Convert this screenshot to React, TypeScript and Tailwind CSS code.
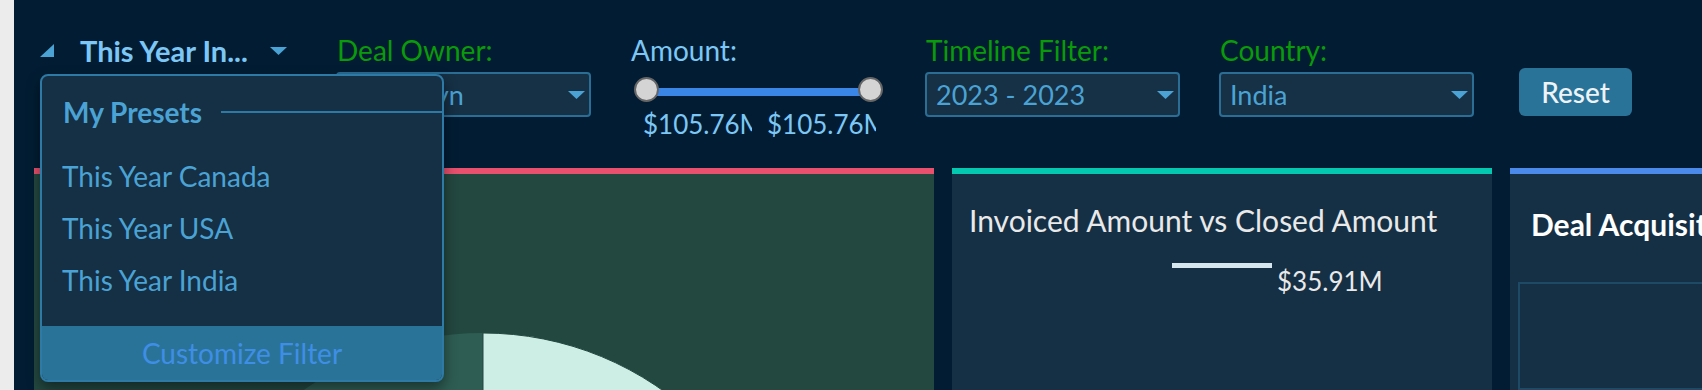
import React from 'react';

const presets = ['This Year Canada', 'This Year USA', 'This Year India'];

function Caret({ className = '' }: { className?: string }) {
  return (
    <svg width="17" height="8" viewBox="0 0 17 8" className={className}>
      <path d="M0 0h17L8.5 8z" fill="#4aa3d4" />
    </svg>
  );
}

function Select({ value }: { value: string }) {
  return (
    <div className="mt-[8px] flex h-[45px] w-[255px] items-center justify-between rounded-[4px] border-2 border-[#2a6e95] bg-[#163045] pl-[9px] pr-[4px]">
      <span className="text-[27px] leading-none text-[#4aa3d4] whitespace-nowrap">{value}</span>
      <Caret />
    </div>
  );
}

function FilterGroup({ label, value, className = '' }: { label: string; value: string; className?: string }) {
  return (
    <div className={`flex w-[255px] shrink-0 flex-col ${className}`}>
      <span className="pl-[1px] text-[28px] leading-none text-[#0a9a0a]">{label}</span>
      <Select value={value} />
    </div>
  );
}

function AmountSlider() {
  return (
    <div className="ml-[40px] flex w-[252px] shrink-0 flex-col">
      <span className="text-[28px] leading-none text-[#7cc7f5]">Amount:</span>
      <div className="relative ml-[3px] mt-[13px] h-[26px] w-[249px]">
        <div className="absolute left-[12px] right-[12px] top-[11px] h-[8px] bg-[#3a86e6]" />
        <div className="absolute left-0 top-0 h-[25px] w-[25px] rounded-full border-2 border-[#666] bg-[#d4d4d4]" />
        <div className="absolute right-0 top-0 h-[25px] w-[25px] rounded-full border-2 border-[#666] bg-[#d4d4d4]" />
      </div>
      <div className="mt-[8px] flex">
        <div className="ml-[12px] w-[109px] overflow-hidden whitespace-nowrap text-[26px] leading-none text-[#7cc7f5]">$105.76M</div>
        <div className="ml-[15px] w-[109px] overflow-hidden whitespace-nowrap text-[26px] leading-none text-[#7cc7f5]">$105.76M</div>
      </div>
    </div>
  );
}

function PresetMenu() {
  return (
    <div className="absolute left-[26px] top-[74px] flex h-[308px] w-[404px] flex-col overflow-hidden rounded-[8px] border-2 border-[#2c7aa5] bg-[#152f44] shadow-[0_6px_14px_rgba(0,0,0,0.45)]">
      <div className="mt-[22px] flex items-center pl-[21px]">
        <span className="text-[28px] font-bold leading-none text-[#4aa3d4]">My Presets</span>
        <div className="ml-[19px] h-[2px] flex-1 bg-[#2c7aa5]" />
      </div>
      <div className="mt-[36px] flex flex-col gap-[24px] pl-[20px]">
        {presets.map((p) => (
          <span key={p} className="text-[28px] leading-none text-[#4aa3d4]">{p}</span>
        ))}
      </div>
      <div className="mt-auto flex h-[54px] items-center justify-center bg-[#2a7398]">
        <span className="text-[28px] leading-none text-[#3f8ee6]">Customize Filter</span>
      </div>
    </div>
  );
}

export default function App() {
  return (
    <div className="flex h-[390px] w-[1702px] overflow-hidden [font-family:Lato,'Liberation_Sans',sans-serif]">
      <div className="w-[14px] shrink-0 bg-[#ececec]" />
      <div className="relative flex-1 overflow-hidden bg-[#021d33]">
        {/* Filter bar */}
        <div className="flex h-[168px] items-start pl-[26px] pt-[36px]">
          <div className="flex w-[296px] shrink-0 items-center">
            <svg width="14" height="13" viewBox="0 0 14 13">
              <path d="M14 0v13H0z" fill="#4aa3d4" />
            </svg>
            <span className="ml-[26px] w-[166px] whitespace-nowrap text-[29px] font-bold leading-none text-[#7cc7f5]">This Year In...</span>
            <Caret className="ml-[24px]" />
          </div>
          <FilterGroup label="Deal Owner:" value="Jacquelyn" />
          <AmountSlider />
          <FilterGroup label="Timeline Filter:" value="2023 - 2023" className="ml-[42px]" />
          <FilterGroup label="Country:" value="India" className="ml-[39px]" />
          <button className="ml-[45px] mt-[32px] h-[48px] w-[113px] shrink-0 rounded-[6px] bg-[#2a7398] text-[28px] font-medium leading-none text-[#eef3f7]">
            Reset
          </button>
        </div>

        {/* Cards */}
        <div className="flex h-[222px] gap-[18px] pl-[20px]">
          <div className="h-full w-[900px] shrink-0 overflow-hidden border-t-[6px] border-[#e8506e] bg-[#234840]">
            <svg width="900" height="216" viewBox="0 0 900 216">
              <circle cx="449" cy="469" r="310" fill="#2e5d53" />
              <path d="M449 469V159A310 310 0 0 1 759 469z" fill="#cdeee4" stroke="#234840" strokeWidth="1" />
            </svg>
          </div>
          <div className="flex h-full w-[540px] shrink-0 flex-col border-t-[6px] border-[#04c8b0] bg-[#153045]">
            <span className="pl-[17px] pt-[31px] text-[30px] leading-none text-[#e9e9e9] whitespace-nowrap">Invoiced Amount vs Closed Amount</span>
            <div className="ml-[220px] mt-[28px] h-[5px] w-[100px] bg-[#d6e6ee]" />
            <span className="ml-[325px] text-[26px] leading-none text-[#e9e9e9]">$35.91M</span>
          </div>
          <div className="flex h-full w-[600px] shrink-0 flex-col border-t-[6px] border-[#4b89ea] bg-[#153045]">
            <span className="pl-[21px] pt-[35px] text-[30px] font-bold leading-none text-white whitespace-nowrap">Deal Acquisition</span>
            <div className="ml-[8px] mt-[43px] h-[200px] border-2 border-[#1f4a66]" />
          </div>
        </div>

        <PresetMenu />
      </div>
    </div>
  );
}
